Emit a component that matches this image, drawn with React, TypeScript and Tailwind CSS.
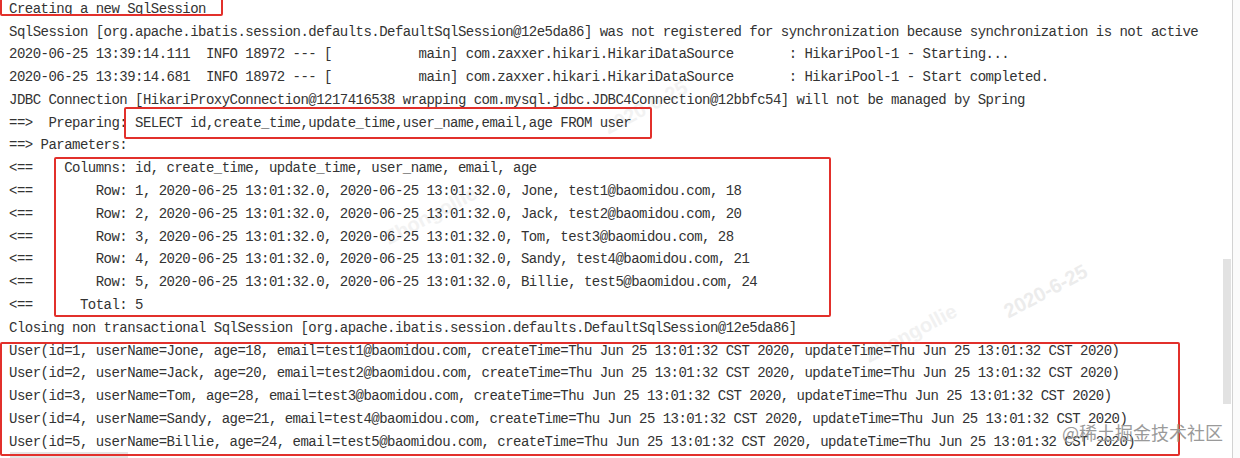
import React from "react";

const lines: string[] = [
  "Creating a new SqlSession",
  "SqlSession [org.apache.ibatis.session.defaults.DefaultSqlSession@12e5da86] was not registered for synchronization because synchronization is not active",
  "2020-06-25 13:39:14.111  INFO 18972 --- [           main] com.zaxxer.hikari.HikariDataSource       : HikariPool-1 - Starting...",
  "2020-06-25 13:39:14.681  INFO 18972 --- [           main] com.zaxxer.hikari.HikariDataSource       : HikariPool-1 - Start completed.",
  "JDBC Connection [HikariProxyConnection@1217416538 wrapping com.mysql.jdbc.JDBC4Connection@12bbfc54] will not be managed by Spring",
  "==>  Preparing: SELECT id,create_time,update_time,user_name,email,age FROM user",
  "==> Parameters: ",
  "<==    Columns: id, create_time, update_time, user_name, email, age",
  "<==        Row: 1, 2020-06-25 13:01:32.0, 2020-06-25 13:01:32.0, Jone, test1@baomidou.com, 18",
  "<==        Row: 2, 2020-06-25 13:01:32.0, 2020-06-25 13:01:32.0, Jack, test2@baomidou.com, 20",
  "<==        Row: 3, 2020-06-25 13:01:32.0, 2020-06-25 13:01:32.0, Tom, test3@baomidou.com, 28",
  "<==        Row: 4, 2020-06-25 13:01:32.0, 2020-06-25 13:01:32.0, Sandy, test4@baomidou.com, 21",
  "<==        Row: 5, 2020-06-25 13:01:32.0, 2020-06-25 13:01:32.0, Billie, test5@baomidou.com, 24",
  "<==      Total: 5",
  "Closing non transactional SqlSession [org.apache.ibatis.session.defaults.DefaultSqlSession@12e5da86]",
  "User(id=1, userName=Jone, age=18, email=test1@baomidou.com, createTime=Thu Jun 25 13:01:32 CST 2020, updateTime=Thu Jun 25 13:01:32 CST 2020)",
  "User(id=2, userName=Jack, age=20, email=test2@baomidou.com, createTime=Thu Jun 25 13:01:32 CST 2020, updateTime=Thu Jun 25 13:01:32 CST 2020)",
  "User(id=3, userName=Tom, age=28, email=test3@baomidou.com, createTime=Thu Jun 25 13:01:32 CST 2020, updateTime=Thu Jun 25 13:01:32 CST 2020)",
  "User(id=4, userName=Sandy, age=21, email=test4@baomidou.com, createTime=Thu Jun 25 13:01:32 CST 2020, updateTime=Thu Jun 25 13:01:32 CST 2020)",
  "User(id=5, userName=Billie, age=24, email=test5@baomidou.com, createTime=Thu Jun 25 13:01:32 CST 2020, updateTime=Thu Jun 25 13:01:32 CST 2020)",
];

const wm = { fontFamily: '"Liberation Sans", Arial, sans-serif' };

export default function App() {
  return (
    <div className="relative w-[1240px] h-[458px] overflow-hidden bg-white flex">
      {/* faint watermarks, behind the log text */}
      <div className="absolute left-[1000px] top-[276px] -rotate-[28deg] text-[20px] font-bold text-[#ececec] z-0" style={wm}>
        2020-6-25
      </div>
      <div className="absolute left-[600px] top-[92px] -rotate-[28deg] text-[20px] font-bold text-[#f2f2f2] z-0" style={wm}>
        2020-6-25
      </div>
      <div className="absolute left-[860px] top-[318px] -rotate-[28deg] text-[20px] font-bold text-[#f1f1f1] z-0" style={wm}>
        Zhongollie
      </div>
      <div className="absolute left-[380px] top-[200px] -rotate-[28deg] text-[20px] font-bold text-[#f2f2f2] z-0" style={wm}>
        Zhongollie
      </div>

      {/* console content column */}
      <div className="relative z-[1] flex-1 min-w-0 flex flex-col">
        <div className="h-[448px]">
          <div
            className="mt-[-2.3px] pl-[9px] whitespace-pre text-[14px] leading-[22.8px] tracking-[-0.526px] text-[#333333]"
            style={{ fontFamily: '"Liberation Mono", "DejaVu Sans Mono", monospace' }}
          >
            {lines.map((l, i) => (
              <div key={i} className="h-[22.8px]">
                {l}
              </div>
            ))}
          </div>
        </div>
        {/* horizontal scrollbar */}
        <div className="h-[10px] flex items-end">
          <div className="ml-[10px] w-[118px] h-[6px] bg-[#e4e4e4]" />
        </div>
      </div>

      {/* vertical scrollbar */}
      <div className="relative z-[1] w-[10px] flex flex-col">
        <div className="h-[259px]" />
        <div className="ml-[1px] w-[8px] h-[145px] bg-[#e2e2e2]" />
      </div>
      <div className="relative z-[1] w-[1px] bg-[#d2d2d2]" />
      <div className="relative z-[1] w-[7px] bg-[#fbfbfb]" />

      {/* red annotation boxes drawn over the log */}
      <div className="absolute z-[2] left-0 top-[-4px] w-[223px] h-[20px] border-2 border-[#e2302b] rounded-[2px]" />
      <div className="absolute z-[2] left-[124px] top-[107px] w-[528px] h-[32px] border-2 border-[#e2302b] rounded-[2px]" />
      <div className="absolute z-[2] left-[54px] top-[157px] w-[777px] h-[160px] border-2 border-[#e2302b] rounded-[2px]" />
      <div className="absolute z-[2] left-0 top-[342px] w-[1180px] h-[114px] border-2 border-[#e2302b] rounded-[2px]" />

      {/* juejin watermark */}
      <div
        className="absolute z-[3] left-[1062px] top-[420px] text-[18px] leading-[24px] text-[#9a9a9a]"
        style={{ fontFamily: '"Noto Sans CJK SC", "Noto Sans", sans-serif' }}
      >
        @稀土掘金技术社区
      </div>
    </div>
  );
}
